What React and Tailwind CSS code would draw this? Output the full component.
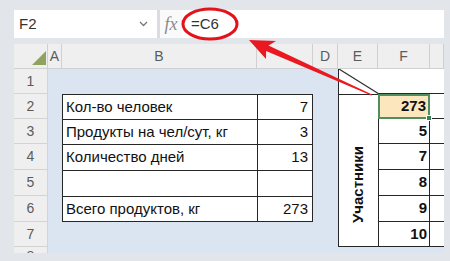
import React from 'react';

const hdr = 'flex items-center justify-center bg-[#efefef] border-r border-b border-[#d0d0d0] text-[14px] text-[#5b5b5b]';
const rowHdr = 'flex items-center justify-center bg-[#efefef] border-r border-b border-[#d4d4d4] text-[14px] text-[#5b5b5b]';
const blue = 'bg-[#dbe4f1]';
const labelCell = 'flex items-center bg-white border-l border-t border-[#262626] pl-[3px] text-[15px] text-[#111] whitespace-nowrap';
const valueCell = 'flex items-center justify-end bg-white border-l border-t border-r border-[#262626] pr-[4px] text-[15px] text-[#111]';
const fCell = 'flex items-center justify-end bg-white border-l border-r border-b border-[#262626] pr-[2px] text-[15px] font-bold text-[#111]';
const gCell = 'bg-white border-b border-[#262626]';

const rows = [
  { n: '1' },
  { n: '2', label: 'Кол-во человек', value: '7', f: '273' },
  { n: '3', label: 'Продукты на чел/сут, кг', value: '3', f: '5' },
  { n: '4', label: 'Количество дней', value: '13', f: '7' },
  { n: '5', label: '', value: '', f: '8' },
  { n: '6', label: 'Всего продуктов, кг', value: '273', f: '9', last: true },
  { n: '7', f: '10' },
];

function Sheet() {
  return (
    <div className="grid h-[209px] grid-cols-[34px_14px_195px_56px_25px_40px_52px_1fr] grid-rows-[25px_25px_25px_25px_26px_26px_26px_25px_6px] overflow-hidden">
      {/* column headers */}
      <div className={hdr + ' relative'}>
        <svg className="absolute left-0 top-0" width="34" height="25" viewBox="0 0 34 25">
          <polygon points="18,21 32,21 32,7" fill="#8fa25f" />
        </svg>
      </div>
      <div className={hdr}>A</div>
      <div className={hdr}>B</div>
      <div className={hdr}></div>
      <div className={hdr}>D</div>
      <div className={hdr}>E</div>
      <div className={hdr + ' bg-[#d3d3d3]'}>F</div>
      <div className={hdr}></div>

      {rows.map((r, i) => {
        const rowStart = [
          'row-start-2',
          'row-start-3',
          'row-start-4',
          'row-start-5',
          'row-start-6',
          'row-start-7',
          'row-start-8',
        ][i];
        return (
          <React.Fragment key={r.n}>
            <div className={rowHdr + ' col-start-1 ' + rowStart + (r.n === '2' ? ' bg-[#d3d3d3]' : '')}>{r.n}</div>
            <div className={blue + ' col-start-2 ' + rowStart}></div>
            {r.label !== undefined ? (
              <>
                <div className={labelCell + ' col-start-3 ' + rowStart + (r.last ? ' border-b' : '')}>{r.label}</div>
                <div className={valueCell + ' col-start-4 ' + rowStart + (r.last ? ' border-b bg-[#fce4b8]' : '')}>{r.value}</div>
              </>
            ) : (
              <>
                <div className={blue + ' col-start-3 ' + rowStart}></div>
                <div className={blue + ' col-start-4 ' + rowStart}></div>
              </>
            )}
            <div className={blue + ' col-start-5 ' + rowStart}></div>
            {r.f === undefined ? (
              <div className={'bg-white border-b border-[#262626] col-start-7 ' + rowStart}></div>
            ) : r.f === '273' ? (
              <div className={'relative flex items-center justify-end bg-[#fce6bd] border-2 border-[#4f8f5f] pr-[2px] text-[15px] font-bold text-[#111] col-start-7 ' + rowStart}>
                273
                <span className="absolute -bottom-[4px] -right-[4px] h-[6px] w-[6px] border border-white bg-[#3f7f4f]"></span>
              </div>
            ) : (
              <div className={fCell + ' col-start-7 ' + rowStart}>{r.f}</div>
            )}
            <div className={gCell + ' col-start-8 ' + rowStart}></div>
          </React.Fragment>
        );
      })}

      {/* E1 with diagonal */}
      <div className="relative col-start-6 row-start-2 border-l border-[#262626] bg-white">
        <svg className="absolute left-0 top-0" width="40" height="25" viewBox="0 0 40 25">
          <line x1="0" y1="0" x2="40" y2="25" stroke="#333" strokeWidth="1.2" />
        </svg>
      </div>
      {/* E2:E7 merged */}
      <div className="col-start-6 row-start-3 row-span-6 flex items-center justify-center border-l border-t border-b border-[#262626] bg-white pt-[28px]">
        <span className="rotate-180 text-[15px] font-bold text-[#111] [writing-mode:vertical-rl]">Участники</span>
      </div>

      {/* row 8 (cut off) */}
      <div className="col-start-1 row-start-9 flex justify-center overflow-hidden bg-[#efefef] border-r border-[#d4d4d4] pt-[1px] text-[14px] leading-[16px] text-[#5b5b5b]">8</div>
      <div className={blue + ' col-start-2 row-start-9 col-span-7'}></div>
    </div>
  );
}

export default function App() {
  return (
    <div className="relative h-[261px] w-[450px] overflow-hidden bg-[#e2e6eb] pl-[14px] pr-[6px] pt-[10px] font-['Liberation_Sans',_Arial,_sans-serif]">
      {/* formula bar */}
      <div className="flex h-[28px]">
        <div className="flex w-[143px] items-center justify-between bg-white pl-[5px] pr-[9px] text-[15px] text-[#333]">
          <span>F2</span>
          <svg width="9" height="6" viewBox="0 0 9 6">
            <polyline points="1,1 4.5,4.5 8,1" fill="none" stroke="#777" strokeWidth="1.3" />
          </svg>
        </div>
        <div className="w-[3px] bg-[#d9dde2]"></div>
        <div className="flex w-[22px] items-center justify-center bg-[#fafafa] font-['Liberation_Serif',_serif] text-[18px] italic text-[#8a8a8a]">fx</div>
        <div className="flex flex-1 items-center bg-white pl-[9px] text-[15px] text-[#333]">=C6</div>
      </div>

      <div className="mt-[6px]">
        <Sheet />
      </div>

      {/* annotation: circle and arrow */}
      <svg className="pointer-events-none absolute left-0 top-0" width="450" height="261" viewBox="0 0 450 261">
        <ellipse cx="210" cy="24" rx="27" ry="15" fill="none" stroke="#e3131c" strokeWidth="3" />
        <polygon
          points="249,40 276,41 268.5,45.5 372,94.4 371.4,95.6 266.1,50.9 266,59"
          fill="#ea1820"
        />
      </svg>
    </div>
  );
}
